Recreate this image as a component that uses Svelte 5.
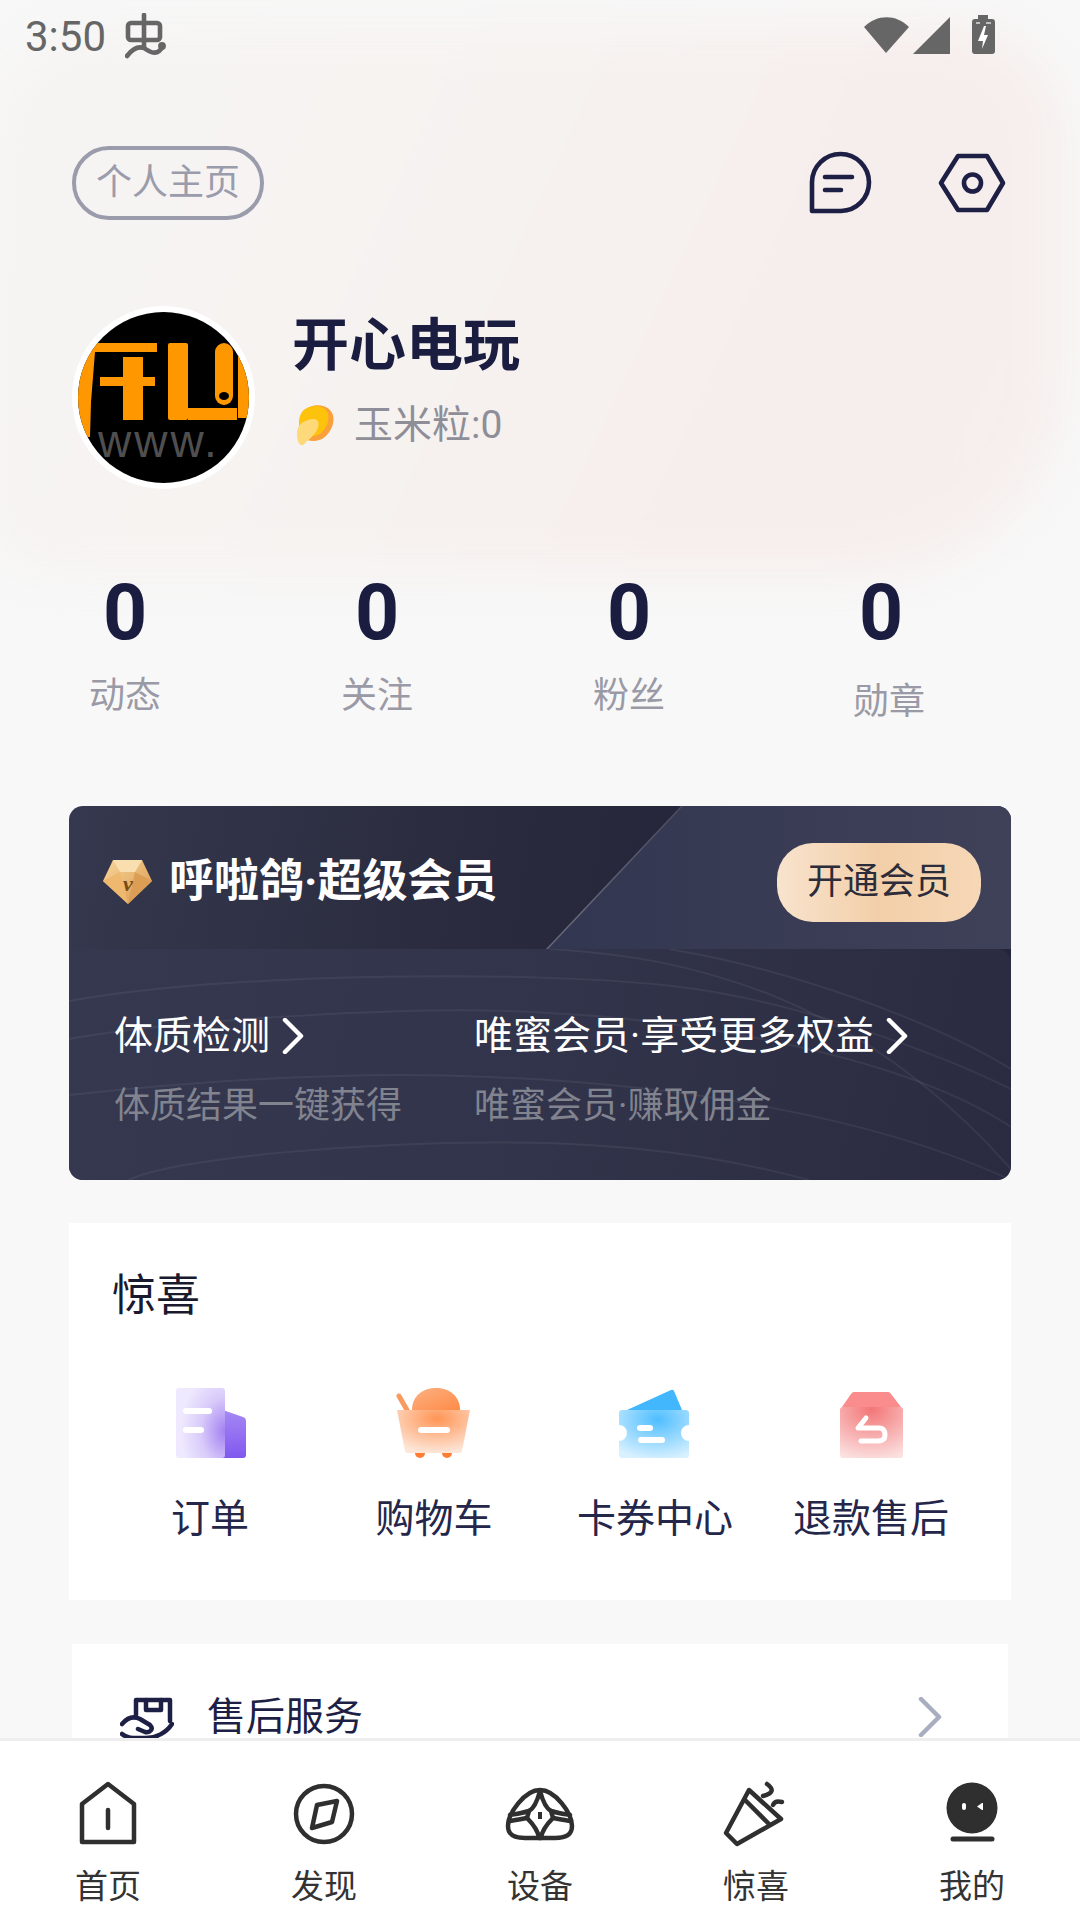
<script>
  const stats = [
    { value: 0, label: '动态' },
    { value: 0, label: '关注' },
    { value: 0, label: '粉丝' },
    { value: 0, label: '勋章', shifted: true }
  ];
  const perks = [
    { title: '体质检测', sub: '体质结果一键获得' },
    { title: '唯蜜会员·享受更多权益', sub: '唯蜜会员·赚取佣金' }
  ];
  const shortcuts = [
    { key: 'order', label: '订单' },
    { key: 'cart', label: '购物车' },
    { key: 'ticket', label: '卡券中心' },
    { key: 'refund', label: '退款售后' }
  ];
  const tabs = [
    { key: 'home', label: '首页' },
    { key: 'find', label: '发现' },
    { key: 'device', label: '设备' },
    { key: 'surprise', label: '惊喜' },
    { key: 'mine', label: '我的' }
  ];
</script>

<div class="screen">
  <div class="blob"></div>

  <div class="scroll">
    <div class="status">
      <div class="status-left">
        <span class="time">3:50</span>
        <svg class="bug" width="42" height="46" viewBox="0 0 42 46" fill="none" stroke="#666" stroke-width="4.6" stroke-linecap="round">
          <rect x="3" y="10" width="32" height="17" rx="3" />
          <path d="M19 2 V34" />
          <path d="M2 43 C8 35 13 33 19 35 C26 40 33 43 38 33" />
          <circle cx="37" cy="33" r="1.6" fill="#666" />
        </svg>
      </div>
      <svg class="status-right" width="132" height="40" viewBox="0 0 132 40">
        <path d="M22 38 L0 12 C13 -1 32 -1 45 12 Z" fill="#666" />
        <path d="M49 39 L86 2 V39 Z" fill="#666" />
        <path d="M114 0 H124 V4 H128 Q131 4 131 7 V36 Q131 39 128 39 H111 Q108 39 108 36 V7 Q108 4 111 4 H114 Z" fill="#666" />
        <path d="M120 11 L114 26 H119 L118 34 L124 20 H120 L122 11 Z" fill="#fff" />
        <path d="M112 8 H116 M122 8 H127" stroke="#ddd" stroke-width="1.5" />
      </svg>
    </div>

    <div class="topbar">
      <div class="home-btn">个人主页</div>
      <div class="top-icons">
        <svg width="66" height="66" viewBox="0 0 66 66" fill="none" stroke="#1d1f45" stroke-width="4.6" stroke-linecap="round" stroke-linejoin="round">
          <path d="M4 61 V32 A28.5 28.5 0 1 1 33 61 Z" />
          <path d="M17 27 H44 M17 40 H33" />
        </svg>
        <svg width="70" height="66" viewBox="0 0 70 66" fill="none" stroke="#1d1f45" stroke-width="4.6" stroke-linejoin="round">
          <path d="M20 6 H49 L65 33 L49 60 H20 L3 33 Z" />
          <circle cx="34.500" cy="33" r="8.500" />
        </svg>
      </div>
    </div>

    <div class="profile">
      <div class="avatar">
        <svg width="171" height="171" viewBox="0 0 171 171">
          <rect width="171" height="171" fill="#000" />
          <g fill="#ff9800">
            <path d="M0 31 H79 V40 H17 L13 90 L12 125 H0 Z" />
            <rect x="45" y="45" width="20" height="63" />
            <rect x="22" y="65" width="55" height="9" />
            <rect x="90" y="31" width="20" height="77" rx="2" />
            <rect x="110" y="96" width="49" height="12" />
            <rect x="137" y="31" width="18" height="62" rx="9" />
            <rect x="160" y="34" width="11" height="72" />
          </g>
          <ellipse cx="146" cy="84" rx="5" ry="4" fill="#000" />
          <text class="avatar-www" x="20" y="145">www.</text>
        </svg>
      </div>
      <div class="profile-text">
        <div class="name">开心电玩</div>
        <div class="points">
          <svg width="40" height="42" viewBox="0 0 40 42">
            <path d="M8 8 C14 0 28 -1 35 6 C41 12 39 24 31 32 C25 38 13 39 8 33 C3 26 3 15 8 8 Z" fill="#f9a03a" />
            <path d="M7 8 C13 1 26 0 31 6 C36 12 33 23 26 29 C20 34 11 33 7 28 C3 22 3 14 7 8 Z" fill="#fcc20c" />
            <path d="M2 30 C2 20 8 17 17 15 C24 14 25 20 22 26 C18 33 13 36 8 41 C4 42 2 37 2 30 Z" fill="#fdd97a" />
          </svg>
          <span>玉米粒:0</span>
        </div>
      </div>
    </div>

    <div class="stats">
      {#each stats as stat}
        <div class="stat" class:shifted={stat.shifted}>
          <div class="stat-value">{stat.value}</div>
          <div class="stat-label">{stat.label}</div>
        </div>
      {/each}
    </div>

    <div class="vip">
      <div class="vip-wedge"></div>
      <div class="vip-edge"></div>
      <div class="vip-head">
        <div class="vip-title">
          <svg width="50" height="46" viewBox="0 0 50 46">
            <defs>
              <linearGradient id="gem" x1="0" y1="0" x2="1" y2="1">
                <stop offset="0" stop-color="#f8d79c" />
                <stop offset="1" stop-color="#d9964a" />
              </linearGradient>
            </defs>
            <path d="M10 1 H39 L49 22 L25 45 L0 22 Z" fill="url(#gem)" />
            <path d="M10 1 L17 13 H32 L39 1 Z" fill="#f9dfb0" />
            <path d="M0 22 L17 13 L25 45 Z" fill="#eeb86f" />
            <path d="M49 22 L32 13 L25 45 Z" fill="#dc9d55" />
            <text class="gem-v" x="25" y="32">v</text>
          </svg>
          <span>呼啦鸽·超级会员</span>
        </div>
        <div class="vip-btn">开通会员</div>
      </div>
      <div class="vip-panel">
        <svg class="vip-lines" viewBox="0 0 942 231" fill="none" stroke="#fff" stroke-opacity="0.06" stroke-width="2">
          <path d="M481 0 C560 5 620 15 700 45 C800 85 880 150 942 220" />
          <path d="M0 52 C150 25 450 20 603 37 C720 50 860 100 942 140" />
          <path d="M0 90 C100 72 350 55 480 64 C640 72 840 110 942 178" />
          <path d="M0 146 C150 130 300 122 420 128 C600 135 800 165 942 231" />
          <path d="M60 231 C100 210 300 190 480 194 C600 198 680 215 740 231" />
          <path d="M600 0 C720 20 860 70 942 120" />
        </svg>
        {#each perks as perk}
          <div class="perk">
            <div class="perk-title">
              <span>{perk.title}</span>
              <svg width="24" height="36" viewBox="0 0 24 36" fill="none" stroke="#fff" stroke-width="4.500" stroke-linecap="round" stroke-linejoin="round">
                <path d="M3 2 L19 18 L3 34" />
              </svg>
            </div>
            <div class="perk-sub">{perk.sub}</div>
          </div>
        {/each}
      </div>
    </div>

    <div class="surprise">
      <div class="surprise-title">惊喜</div>
      <div class="shortcuts">
        {#each shortcuts as item}
          <div class="shortcut">
            <svg width="80" height="80" viewBox="0 0 80 80">
              {#if item.key === 'order'}
                <defs>
                  <linearGradient id="orderBack" x1="0" y1="0" x2="0" y2="1">
                    <stop offset="0" stop-color="#a78af4" />
                    <stop offset="1" stop-color="#8058ef" />
                  </linearGradient>
                  <radialGradient id="orderDoc" cx="1" cy="0.62" r="0.9">
                    <stop offset="0" stop-color="#a380f1" />
                    <stop offset="0.55" stop-color="#d9cbfa" />
                    <stop offset="1" stop-color="#eee9fe" />
                  </radialGradient>
                </defs>
                <path d="M50 24 L73 32 Q76 33 76 36 V70 Q76 73 73 73 H50 Z" fill="url(#orderBack)" />
                <rect x="6" y="3" width="49" height="70" rx="3" fill="url(#orderDoc)" />
                <rect x="13" y="23" width="29" height="6" rx="3" fill="#fff" />
                <rect x="13" y="42" width="21" height="6" rx="3" fill="#fff" />
              {:else if item.key === 'cart'}
                <defs>
                  <radialGradient id="cartBody" cx="0.55" cy="0.2" r="0.8">
                    <stop offset="0" stop-color="#ff9555" />
                    <stop offset="1" stop-color="#fde6d8" />
                  </radialGradient>
                  <linearGradient id="cartDome" x1="0" y1="0" x2="1" y2="1">
                    <stop offset="0" stop-color="#fbb183" />
                    <stop offset="1" stop-color="#ff8b47" />
                  </linearGradient>
                </defs>
                <path d="M5 11 L13 25" stroke="#fa9a5f" stroke-width="5" stroke-linecap="round" />
                <path d="M18 25 C18 10 30 3 42 3 C54 3 66 10 66 25 Z" fill="url(#cartDome)" />
                <circle cx="26" cy="68" r="5" fill="#ff7d32" />
                <circle cx="53" cy="68" r="5" fill="#ff7d32" />
                <path d="M3 25 H76 L68 66 Q67.500 68 65 68 H14 Q11.500 68 11 66 Z" fill="url(#cartBody)" />
                <rect x="24" y="42" width="32" height="6" rx="3" fill="#fff" />
              {:else if item.key === 'ticket'}
                <defs>
                  <radialGradient id="ticketBody" cx="0.55" cy="0.2" r="0.85">
                    <stop offset="0" stop-color="#4fbeff" />
                    <stop offset="1" stop-color="#d9f1ff" />
                  </radialGradient>
                </defs>
                <path d="M12 25 L56 5 Q58 4 59 6 L67 25 Z" fill="#43b7fd" />
                <path d="M7 25 H71 Q74 25 74 28 V40 A8 8 0 0 0 74 56 V70 Q74 73 71 73 H7 Q4 73 4 70 V56 A8 8 0 0 0 4 40 V28 Q4 25 7 25 Z" fill="url(#ticketBody)" />
                <rect x="22" y="40" width="16" height="6" rx="3" fill="#fff" />
                <rect x="23" y="52" width="27" height="6" rx="3" fill="#fff" />
              {:else}
                <defs>
                  <radialGradient id="refundBody" cx="0.5" cy="0.05" r="1">
                    <stop offset="0" stop-color="#f37677" />
                    <stop offset="1" stop-color="#fbe0e0" />
                  </radialGradient>
                </defs>
                <path d="M23 7 H57 Q59 7 60 9 L70 22 H11 L20 9 Q21 7 23 7 Z" fill="#fb8c8d" />
                <rect x="9" y="22" width="63" height="51" rx="3" fill="url(#refundBody)" />
                <path d="M35 33 L27 43 H48 Q54 43 54 50 Q54 56 47 56 H30" fill="none" stroke="#fff" stroke-width="5" stroke-linecap="round" stroke-linejoin="round" />
              {/if}
            </svg>
            <div class="shortcut-label">{item.label}</div>
          </div>
        {/each}
      </div>
    </div>

    <div class="service">
      <svg class="service-icon" width="54" height="60" viewBox="0 0 54 60" fill="none" stroke="#1d1f45" stroke-width="4.500" stroke-linecap="round" stroke-linejoin="round">
        <path d="M16 18 V3 H50 V24" />
        <path d="M26 3 V13 H41 V3" />
        <path d="M2 27 C8 20 14 19 20 22 L30 28 C34 32 30 36 25 35 L18 32" />
        <path d="M2 37 C8 42 14 41 26 41 C36 41 46 36 52 27" />
      </svg>
      <span class="service-text">售后服务</span>
      <svg class="service-arrow" width="24" height="40" viewBox="0 0 24 40" fill="none" stroke="#a9adc0" stroke-width="4.500" stroke-linecap="round" stroke-linejoin="round">
        <path d="M3 2 L21 20 L3 38" />
      </svg>
    </div>
  </div>

  <div class="tabbar">
    {#each tabs as tab}
      <div class="tab">
        <svg width="80" height="80" viewBox="0 0 80 80" fill="none" stroke="#2f2f2f" stroke-width="4.500" stroke-linecap="round" stroke-linejoin="round">
          {#if tab.key === 'home'}
            <path d="M40 8 L66 28 V66 H14 V28 Z" />
            <path d="M40 34 V52" />
          {:else if tab.key === 'find'}
            <circle cx="40" cy="38" r="28" />
            <path d="M33 29 L53 25 L48 46 L28 52 Z" />
          {:else if tab.key === 'device'}
            <path d="M40 14 C55 14 72 37 72 50 C72 60 64 62 55 62 H25 C16 62 8 60 8 50 C8 37 25 14 40 14 Z" />
            <path d="M40 15 C43 26 47 33 51 35 C57 37 64 38 70 39 M40 15 C37 26 33 33 29 35 C23 37 16 38 10 39" />
            <path d="M70 45 C64 44 58 43 53 42 C47 48 42 54 41 62 M10 45 C16 44 22 43 27 42 C33 48 38 54 39 62" />
            <path d="M51 35 L53 42 M29 35 L27 42" />
            <rect x="38" y="36" width="4" height="7" fill="#2f2f2f" stroke="none" />
          {:else if tab.key === 'surprise'}
            <path d="M33 14 L65 43 L21 68 L10 57 Z" />
            <path d="M29 24 L53 48" />
            <path d="M47 20 Q62 16 51 8" />
            <path d="M57 29 Q59 24 66 26" />
          {:else}
            <circle cx="40" cy="32" r="25.500" fill="#2f2f2f" stroke="none" />
            <path d="M21 63 H60" stroke-width="5" />
            <rect x="30" y="27" width="4" height="7" rx="2" fill="#fff" stroke="none" />
            <path d="M50 27 L45 30.500 L50 34 L51 34 V27 Z" fill="#fff" stroke="none" />
          {/if}
        </svg>
        <div class="tab-label">{tab.label}</div>
      </div>
    {/each}
  </div>
</div>

<style>
  :global(body) {
    margin: 0;
    background: #f8f8f8;
  }

  .screen {
    position: relative;
    width: 1080px;
    height: 1920px;
    display: flex;
    flex-direction: column;
    overflow: hidden;
    background: #f8f8f8;
    font-family: Roboto, "Noto Sans CJK SC", sans-serif;
  }

  .blob {
    position: absolute;
    left: -30px;
    top: 25px;
    width: 1095px;
    height: 550px;
    border-radius: 130px 110px 200px 90px;
    background: linear-gradient(115deg, #f6f5f4 0%, #f6f2f0 45%, #f6eeec 70%, #f6efed 100%);
    filter: blur(22px);
  }

  .scroll {
    position: relative;
    flex: 1;
    min-height: 0;
    overflow: hidden;
  }

  .status {
    height: 70px;
    display: flex;
    justify-content: space-between;
    align-items: flex-start;
    padding: 0 84px 0 25px;
  }

  .status-left {
    display: flex;
    gap: 19px;
    padding-top: 13px;
  }

  .time {
    font-size: 42px;
    line-height: 47px;
    color: #666;
  }

  .status-right {
    margin-top: 15px;
  }

  .topbar {
    margin-top: 76px;
    padding: 0 72px;
    height: 74px;
    display: flex;
    justify-content: space-between;
    align-items: center;
  }

  .home-btn {
    box-sizing: border-box;
    width: 192px;
    height: 74px;
    border: 4px solid #9a9bab;
    border-radius: 37px;
    font-size: 36px;
    line-height: 66px;
    text-align: center;
    color: #9a9bab;
  }

  .top-icons {
    display: flex;
    gap: 64px;
  }

  .profile {
    margin-top: 86px;
    padding-left: 72px;
    display: flex;
    align-items: flex-start;
    gap: 37px;
  }

  .avatar {
    width: 171px;
    height: 171px;
    border: 6px solid #fff;
    border-radius: 50%;
    overflow: hidden;
    flex: none;
  }

  .avatar svg {
    display: block;
  }

  .avatar-www {
    font-family: "Liberation Sans", sans-serif;
    font-size: 46px;
    fill: #4f4f4f;
    letter-spacing: 3px;
  }

  .profile-text {
    margin-top: 5px;
  }

  .name {
    font-size: 57px;
    line-height: 70px;
    font-weight: 700;
    color: #1a1c40;
  }

  .points {
    margin-top: 20px;
    padding-left: 3px;
    display: flex;
    align-items: center;
    gap: 19px;
    font-size: 39px;
    line-height: 48px;
    color: #8e8e98;
  }

  .stats {
    margin-top: 77px;
    margin-left: -1px;
    display: grid;
    grid-template-columns: repeat(4, 252px);
    text-align: center;
  }

  .stat-value {
    font-size: 77px;
    line-height: 94px;
    font-weight: 700;
    color: #1a1c40;
  }

  .stat-label {
    margin-top: 14px;
    font-size: 36px;
    line-height: 44px;
    color: #9a9aa6;
  }

  .stat.shifted .stat-label {
    margin-top: 20px;
    margin-left: 16px;
  }

  .vip {
    position: relative;
    margin: 82px 69px 0;
    height: 374px;
    border-radius: 14px;
    overflow: hidden;
    background: linear-gradient(100deg, #35384e 0%, #2a2b3e 40%, #24253a 68%);
  }

  .vip-wedge {
    position: absolute;
    inset: 0;
    background: linear-gradient(90deg, #333650 50%, #3f4159 100%);
    clip-path: polygon(613px 0, 100% 0, 100% 143px, 478px 143px);
  }

  .vip-edge {
    position: absolute;
    inset: 0;
    background: linear-gradient(180deg, #4a4c60 0, #67687a 110px);
    clip-path: polygon(612px 0, 614px 0, 479px 143px, 477px 143px);
  }

  .vip-head {
    position: relative;
    box-sizing: border-box;
    height: 143px;
    padding: 9px 30px 0 34px;
    display: flex;
    justify-content: space-between;
    align-items: center;
  }

  .vip-title {
    display: flex;
    align-items: center;
    gap: 16px;
    font-size: 45px;
    line-height: 56px;
    font-weight: 700;
    color: #fff;
  }

  .gem-v {
    font-family: "Liberation Serif", serif;
    font-size: 22px;
    font-weight: 700;
    font-style: italic;
    fill: #7a4a12;
    text-anchor: middle;
  }

  .vip-btn {
    width: 204px;
    height: 79px;
    border-radius: 36px;
    background: linear-gradient(90deg, #f8e3cd 0%, #f2cfa9 50%, #f6d7b6 100%);
    font-size: 36px;
    line-height: 79px;
    text-align: center;
    color: #2c2c3a;
  }

  .vip-panel {
    position: relative;
    height: 231px;
    border-radius: 14px 14px 0 0;
    background: linear-gradient(100deg, #35384f 0%, #32344b 50%, #2a2b40 100%);
    display: flex;
    padding-left: 45px;
  }

  .vip-lines {
    position: absolute;
    left: 0;
    top: 0;
    width: 942px;
    height: 231px;
  }

  .perk {
    position: relative;
    width: 360px;
    flex: none;
    padding-top: 63px;
  }

  .perk + .perk {
    width: auto;
  }

  .perk-title {
    display: flex;
    align-items: center;
    gap: 12px;
    font-size: 39px;
    line-height: 48px;
    color: #fff;
  }

  .perk-sub {
    margin-top: 22px;
    font-size: 36px;
    line-height: 48px;
    color: #81838f;
  }

  .surprise {
    margin: 43px 69px 0;
    height: 377px;
    box-sizing: border-box;
    background: #fff;
    padding: 45px 0 0 43px;
  }

  .surprise-title {
    font-size: 44px;
    line-height: 56px;
    color: #1a1a2e;
  }

  .shortcuts {
    margin: 61px 0 0 -13px;
    display: grid;
    grid-template-columns: 222px 226px 216px 216px;
  }

  .shortcut {
    display: flex;
    flex-direction: column;
    align-items: center;
  }

  .shortcut svg {
    display: block;
  }

  .shortcut-label {
    margin-top: 30px;
    font-size: 39px;
    line-height: 48px;
    color: #24264a;
  }

  .service {
    margin: 44px 72px 0;
    padding: 53px 66px 40px 48px;
    background: #fff;
    display: flex;
    align-items: flex-start;
  }

  .service-icon {
    flex: none;
  }

  .service-text {
    margin-left: 33px;
    font-size: 39px;
    line-height: 40px;
    color: #1d1f45;
  }

  .service-arrow {
    flex: none;
    margin-left: auto;
  }

  .tabbar {
    flex: none;
    position: relative;
    height: 179px;
    border-top: 3px solid #eee;
    background: #fff;
    display: grid;
    grid-template-columns: repeat(5, 216px);
  }

  .tab {
    display: flex;
    flex-direction: column;
    align-items: center;
    padding-top: 35px;
  }

  .tab svg {
    display: block;
  }

  .tab-label {
    margin-top: 11px;
    font-size: 33px;
    line-height: 40px;
    color: #333;
  }
</style>
